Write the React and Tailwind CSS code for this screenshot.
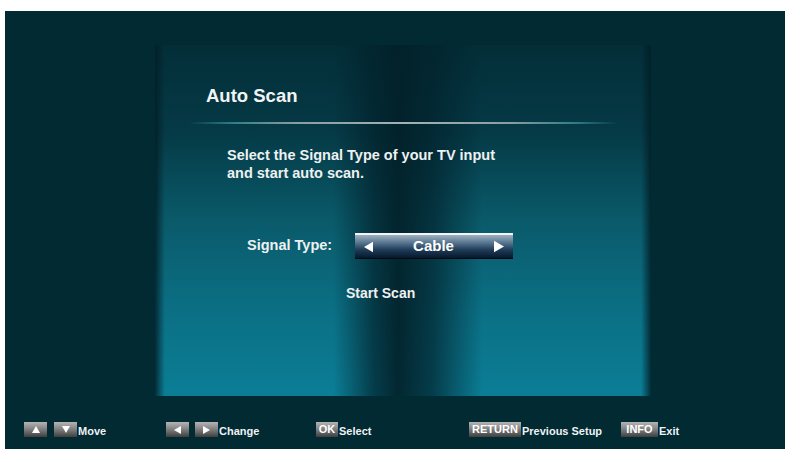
import React from "react";

const font = { fontFamily: '"Liberation Sans", Arial, sans-serif' };

function Tri({ dir, className = "" }) {
  const pts = {
    up: "4,0 8,7 0,7",
    down: "0,0 8,0 4,7",
    left: "7,0 7,8 0,4",
    right: "0,0 7,4 0,8",
  }[dir];
  const vb = dir === "up" || dir === "down" ? "0 0 8 7" : "0 0 7 8";
  return (
    <svg viewBox={vb} className={className}>
      <polygon points={pts} fill="#ffffff" />
    </svg>
  );
}

function Key({ w, children }) {
  return (
    <div
      className={`${w} h-[15px] flex items-center justify-center bg-[linear-gradient(to_bottom,#b4b4b4_0%,#8a8a8a_40%,#3e3e3e_100%)]`}
    >
      {children}
    </div>
  );
}

function Label({ children }) {
  return <span className="ml-px text-[11px] font-bold leading-none text-[#eef2f3] pt-[3px]">{children}</span>;
}

export default function App() {
  return (
    <div className="w-[800px] h-[462px] bg-white pt-[11px] pl-[5px]" style={font}>
      <div className="w-[780px] h-[438px] bg-[#022a33] flex flex-col">
        {/* Menu panel */}
        <div className="ml-[150px] mt-[34px] w-[496px] h-[351px] flex flex-col bg-[linear-gradient(to_right,rgba(2,30,38,0.85)_0%,rgba(2,30,38,0)_2%,rgba(2,30,38,0)_36%,rgba(2,34,44,0.7)_44%,rgba(2,32,40,0.92)_49%,rgba(2,34,44,0.7)_56%,rgba(2,30,38,0)_66%,rgba(2,30,38,0)_98%,rgba(2,30,38,0.85)_100%),linear-gradient(to_bottom,#032e38_0%,#053a46_25%,#0a5a6a_50%,#0b6f84_75%,#0b7e96_100%)]">
          <div className="ml-[51px] mt-[40px] text-[18.5px] leading-[22px] font-bold text-[#f2f4f4]">Auto Scan</div>
          <div className="ml-[34px] mt-[15px] w-[429px] h-[2px] bg-[linear-gradient(to_right,rgba(120,150,155,0)_0%,#2f7d84_10%,#8a9ea4_25%,#a3b1b5_50%,#8a9ea4_75%,#2f7d84_90%,rgba(120,150,155,0)_100%)]" />
          <div className="ml-[72px] mt-[22px] text-[14.5px] leading-[18px] font-bold text-[#eef1f1]">
            Select the Signal Type of your TV input
            <br />
            and start auto scan.
          </div>
          <div className="ml-[92px] mt-[51px] flex items-center">
            <span className="w-[108px] text-[14.5px] font-bold text-[#eef1f1]">Signal Type:</span>
            <div className="w-[158px] h-[26px] flex items-center justify-between px-[9px] border-t-2 border-[#f2f5f7] border-b border-b-[#010a12] bg-[linear-gradient(to_bottom,#9fb1c1_0%,#5f7c95_30%,#1d3b58_65%,#07182b_100%)]">
              <Tri dir="left" className="w-[9px] h-[12px]" />
              <span className="text-[15px] font-bold text-white">Cable</span>
              <Tri dir="right" className="w-[10px] h-[13px]" />
            </div>
          </div>
          <div className="ml-[191px] mt-[25px] text-[14px] leading-[18px] font-bold text-[#eef1f1]">Start Scan</div>
        </div>

        {/* Footer hints */}
        <div className="mt-[26px] pl-[19px] flex items-start">
          <div className="w-[142px] flex items-center">
            <Key w="w-[23px]">
              <Tri dir="up" className="w-[8px] h-[7px]" />
            </Key>
            <div className="ml-[7px]">
              <Key w="w-[23px]">
                <Tri dir="down" className="w-[8px] h-[7px]" />
              </Key>
            </div>
            <Label>Move</Label>
          </div>
          <div className="w-[150px] flex items-center">
            <Key w="w-[23px]">
              <Tri dir="left" className="w-[7px] h-[8px]" />
            </Key>
            <div className="ml-[6px]">
              <Key w="w-[23px]">
                <Tri dir="right" className="w-[7px] h-[8px]" />
              </Key>
            </div>
            <Label>Change</Label>
          </div>
          <div className="w-[153px] flex items-center">
            <Key w="w-[22px]">
              <span className="text-[11px] font-bold text-white leading-none">OK</span>
            </Key>
            <Label>Select</Label>
          </div>
          <div className="w-[152px] flex items-center">
            <Key w="w-[52px]">
              <span className="text-[11px] font-bold text-white leading-none">RETURN</span>
            </Key>
            <Label>Previous Setup</Label>
          </div>
          <div className="flex items-center">
            <Key w="w-[37px]">
              <span className="text-[11px] font-bold text-white leading-none">INFO</span>
            </Key>
            <Label>Exit</Label>
          </div>
        </div>
      </div>
    </div>
  );
}
